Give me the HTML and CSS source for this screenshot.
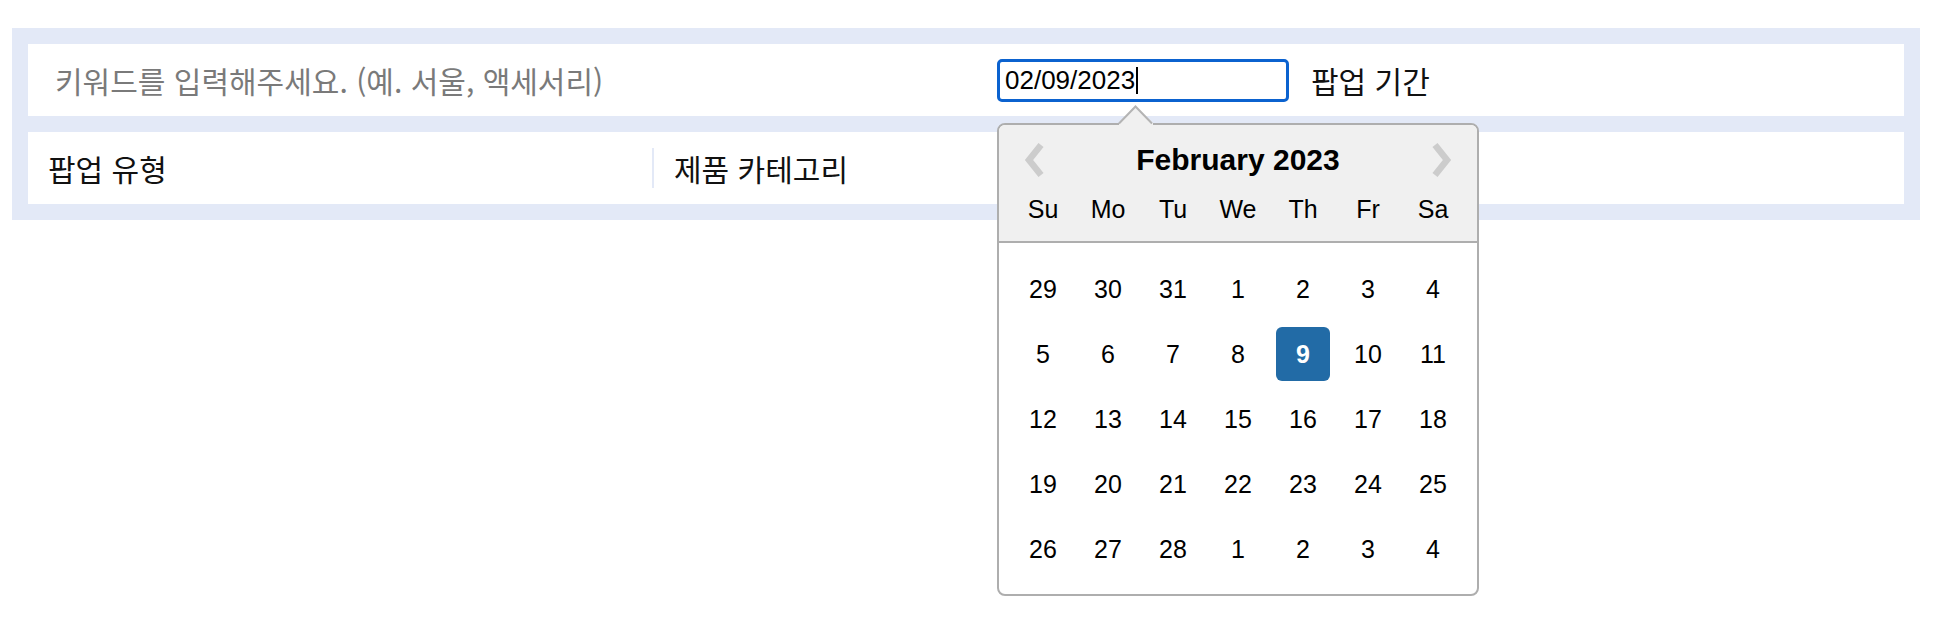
FILE: index.html
```html
<!DOCTYPE html>
<html lang="ko">
<head>
<meta charset="utf-8">
<title>팝업 검색</title>
<link rel="stylesheet" href="styles.css">
</head>
<body>
<div class="search-panel">
  <div class="row row-top">
    <div class="keyword"><span class="placeholder">키워드를 입력해주세요. (예. 서울, 액세서리)</span></div>
    <div class="period">
      <div class="date-input"><span class="date-text">02/09/2023</span><span class="caret"></span></div>
      <span class="label">팝업 기간</span>
      <div class="datepicker">
        <svg class="dp-arrow" width="36" height="21" viewBox="0 0 36 21">
          <polygon points="1,18 17,1 35,18 35,21 1,21" fill="#f0f0f0"/>
          <polyline points="1,18.5 17.5,1.5 34,18.5" fill="none" stroke="#b4b4b4" stroke-width="2"/>
        </svg>
        <div class="dp-head">
          <div class="dp-title">
            <svg class="chev" width="22" height="34" viewBox="0 0 22 34"><polyline points="18,2 6,17 18,32" fill="none" stroke="#cccccc" stroke-width="6.5"/></svg>
            <span class="month">February 2023</span>
            <svg class="chev" width="22" height="34" viewBox="0 0 22 34"><polyline points="4,2 16,17 4,32" fill="none" stroke="#cccccc" stroke-width="6.5"/></svg>
          </div>
          <div class="dp-weekdays">
            <span>Su</span><span>Mo</span><span>Tu</span><span>We</span><span>Th</span><span>Fr</span><span>Sa</span>
          </div>
        </div>
        <div class="dp-days">
          <span class="day">29</span><span class="day">30</span><span class="day">31</span><span class="day">1</span><span class="day">2</span><span class="day">3</span><span class="day">4</span>
          <span class="day">5</span><span class="day">6</span><span class="day">7</span><span class="day">8</span><span class="day active">9</span><span class="day">10</span><span class="day">11</span>
          <span class="day">12</span><span class="day">13</span><span class="day">14</span><span class="day">15</span><span class="day">16</span><span class="day">17</span><span class="day">18</span>
          <span class="day">19</span><span class="day">20</span><span class="day">21</span><span class="day">22</span><span class="day">23</span><span class="day">24</span><span class="day">25</span>
          <span class="day">26</span><span class="day">27</span><span class="day">28</span><span class="day">1</span><span class="day">2</span><span class="day">3</span><span class="day">4</span>
        </div>
      </div>
    </div>
  </div>
  <div class="row row-bottom">
    <div class="filter"><span class="label">팝업 유형</span></div>
    <div class="filter sep"><span class="label">제품 카테고리</span></div>
    <div class="filter sep"></div>
  </div>
</div>
</body>
</html>
```

FILE: styles.css
```css
* { box-sizing: border-box; }

html, body {
  min-height: 640px;
}

body {
  margin: 0;
  padding-top: 28px;
  background: #ffffff;
  font-family: "Noto Sans CJK KR", "Noto Sans", sans-serif;
}

.search-panel {
  margin: 0 28px 0 12px;
  background: #e3e9f7;
  padding: 16px;
  display: flex;
  flex-direction: column;
  gap: 16px;
}

.row {
  background: #ffffff;
  height: 72px;
  display: flex;
}

.keyword {
  flex: 0 0 969px;
  display: flex;
  align-items: center;
  padding-left: 27px;
  font-size: 30px;
  color: #7a7a7a;
}

.period {
  position: relative;
  display: flex;
  align-items: center;
  gap: 22px;
}

.date-input {
  width: 292px;
  height: 43px;
  border: 3px solid #0b62cf;
  border-radius: 5px;
  display: flex;
  align-items: center;
  padding-left: 5px;
  font-family: "Liberation Sans", Arial, sans-serif;
  font-size: 26px;
  color: #000000;
}

.caret {
  width: 2px;
  height: 27px;
  background: #000000;
  margin-left: 1px;
}

.label {
  font-size: 30px;
  color: #111111;
}

.row-bottom {
  align-items: center;
}

.filter {
  flex: 1 1 0;
  height: 40px;
  display: flex;
  align-items: center;
  padding-left: 20px;
}

.filter.sep {
  border-left: 2px solid #e3e9f7;
}

.datepicker {
  position: absolute;
  left: 0;
  top: 79px;
  width: 482px;
  height: 473px;
  border: 2px solid #aeaeae;
  border-radius: 8px;
  background: #ffffff;
  font-family: "Liberation Sans", Arial, sans-serif;
  color: #000000;
  z-index: 10;
}

.dp-arrow {
  position: absolute;
  left: 119px;
  top: -20px;
}

.dp-head {
  background: #f0f0f0;
  border-bottom: 2px solid #aeaeae;
  border-radius: 6px 6px 0 0;
  padding: 0 17px 15px;
}

.dp-title {
  height: 67px;
  display: flex;
  align-items: center;
  justify-content: space-between;
  padding: 2px 7px 0;
}

.month {
  font-size: 30px;
  font-weight: bold;
}

.chev { display: block; }

.dp-weekdays {
  display: grid;
  grid-template-columns: repeat(7, 54px);
  column-gap: 11px;
  height: 34px;
  align-items: center;
  text-align: center;
  font-size: 25px;
}

.dp-days {
  padding: 19px 17px 18px;
  display: grid;
  grid-template-columns: repeat(7, 54px);
  grid-auto-rows: 54px;
  gap: 11px;
  font-size: 25px;
}

.day {
  display: flex;
  align-items: center;
  justify-content: center;
}

.day.active {
  background: #226ba6;
  color: #ffffff;
  font-weight: bold;
  border-radius: 6px;
}
```
